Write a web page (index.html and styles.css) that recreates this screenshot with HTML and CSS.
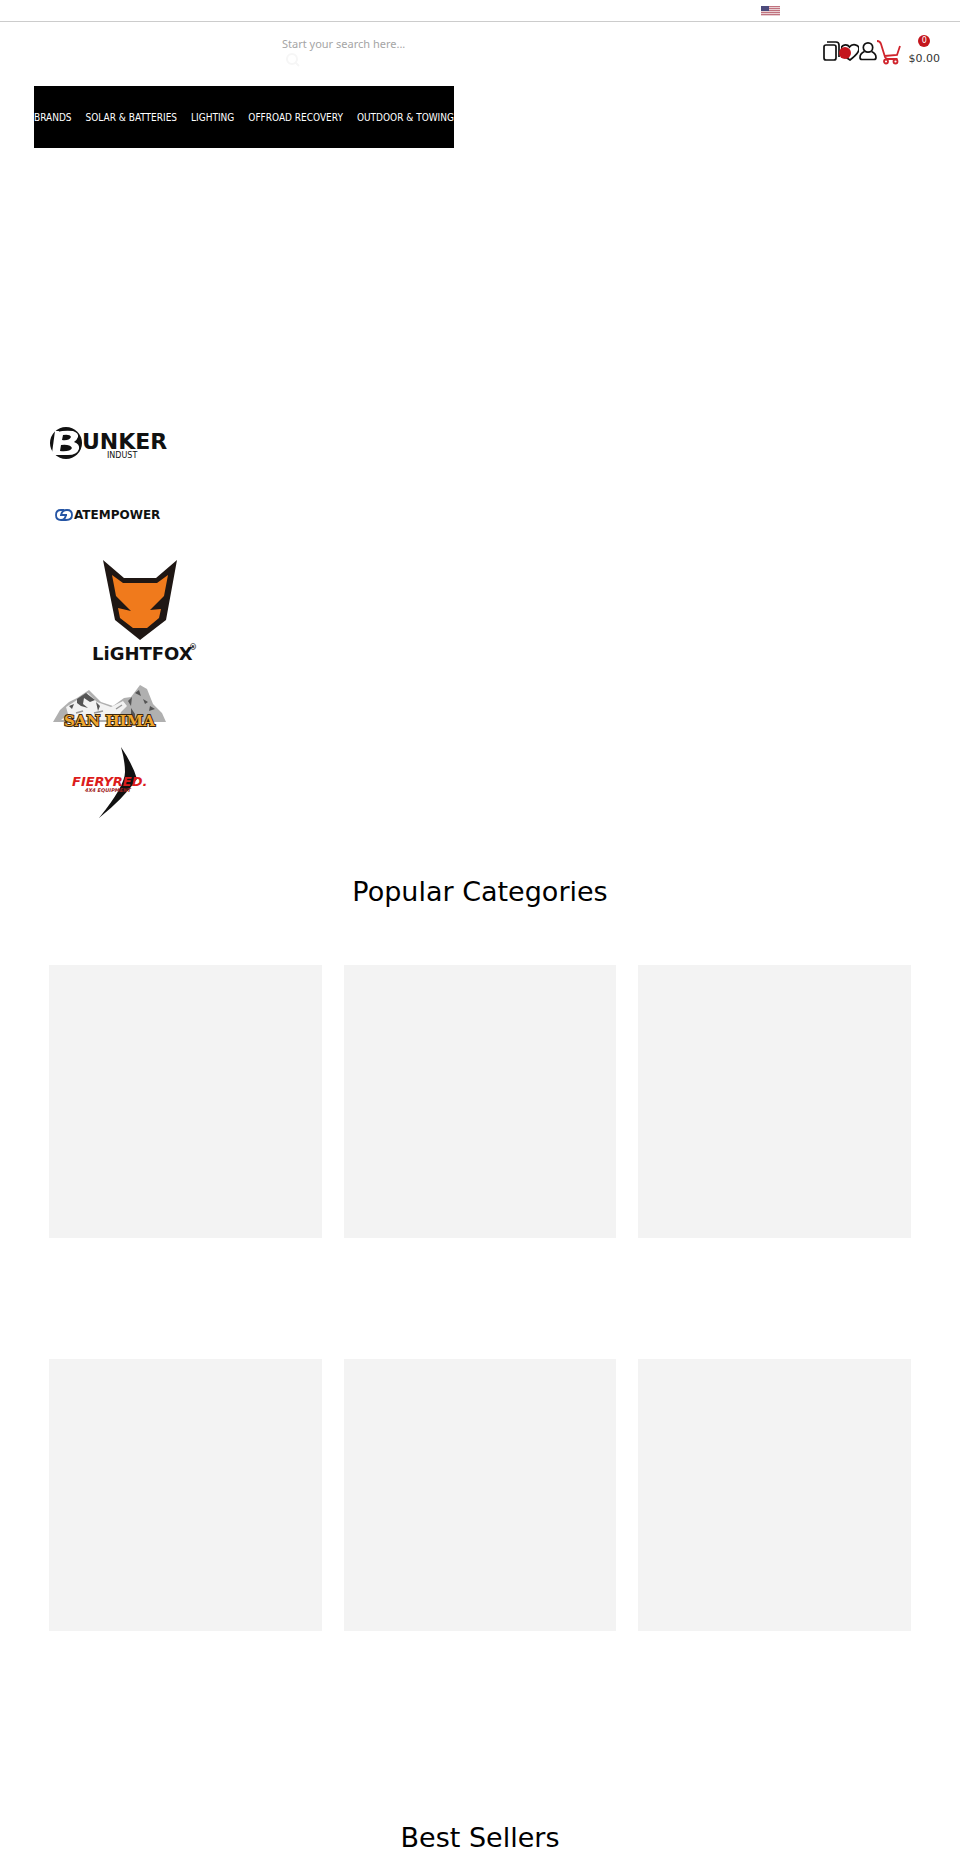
FILE: index.html
```html
<!DOCTYPE html>
<html lang="en">
<head>
    <meta charset="UTF-8">
    <meta name="viewport" content="width=device-width, initial-scale=1.0">
    <title>Popular Categories</title>
    <link rel="stylesheet" href="styles.css">
</head>
<body>
    <div class="topbar">
        <svg class="flag" viewBox="0 0 19 10" role="img" aria-label="United States">
            <rect width="19" height="10" fill="#e9cfd3"/>
            <path d="M0 .5h19M0 2.5h19M0 4.5h19M0 6.5h19M0 8.5h19" stroke="#c0737f" stroke-width="1"/>
            <rect width="8" height="5" fill="#4d4b7c"/>
        </svg>
    </div>

    <header class="header">
        <form class="search">
            <input type="text" placeholder="Start your search here..." aria-label="Search">
            <button type="button" aria-label="Submit search">
                <svg viewBox="0 0 14 14" width="14" height="14" fill="none" stroke="#f6f6f6" stroke-width="2">
                    <circle cx="6" cy="6" r="5"/>
                    <path d="M9 9L13 13"/>
                </svg>
            </button>
        </form>
        <div class="tools">
            <a href="#" class="tool" aria-label="Compare">
                <svg viewBox="0 0 18 24" width="18" height="24" fill="none" stroke="#111" stroke-width="1.700">
                    <rect x="1" y="5" width="12" height="15" rx="2"/>
                    <path d="M4 2h9q3 0 3 3v12"/>
                </svg>
                <span class="dot"></span>
            </a>
            <a href="#" class="tool" aria-label="Wishlist">
                <svg viewBox="0 0 18 24" width="18" height="24" fill="none" stroke="#111" stroke-width="1.700">
                    <path d="M9 20C4 17 0 13 0 9.500c0-5 6-6 8.500-2.500C11 3.500 18 4 18 9c0 4-5 8-9 11z"/>
                </svg>
            </a>
            <a href="#" class="tool" aria-label="Account">
                <svg viewBox="0 0 18 24" width="18" height="24" fill="none" stroke="#111" stroke-width="1.700">
                    <circle cx="9" cy="7.500" r="4.700"/>
                    <path d="M5.500 11.500C2 13 1 15.500 1 17.500q0 2 2 2h12q2 0 2-2c0-2-1-4.500-4.500-6"/>
                </svg>
            </a>
            <a href="#" class="tool" aria-label="Cart">
                <svg viewBox="0 0 24 26" width="24" height="26" fill="none" stroke="#d0242c" stroke-width="1.800">
                    <path d="M0 1q3 0 4 3l4 13q1 2 3 2h9.500M7.500 16l12.500-1L23 6"/>
                    <circle cx="9" cy="21.500" r="2"/>
                    <circle cx="18.500" cy="21.500" r="2"/>
                </svg>
            </a>
            <div class="total">
                <span class="count">0</span>
                <span>$0.00</span>
            </div>
        </div>
    </header>

    <nav class="nav">
        <a href="#">BRANDS</a>
        <a href="#">SOLAR &amp; BATTERIES</a>
        <a href="#">LIGHTING</a>
        <a href="#">OFFROAD RECOVERY</a>
        <a href="#">OUTDOOR &amp; TOWING</a>
    </nav>

    <main>
        <div class="brands">
            <a href="#">
                <svg class="logo" viewBox="0 0 120 72" width="120" height="72">
                    <circle cx="17" cy="36" r="16" fill="#111"/>
                    <path d="M6 24L10 24L7 48L3 46z" fill="#fff"/>
                    <path fill-rule="evenodd" fill="#fff" d="M8 25Q16 23 24 24Q30 26 29 30Q28 33 25 35Q31 37 30 42Q28 48 19 48L5 48Q7 36 8 25zM14 28L13 33Q20 34 22 30Q21 27 14 28zM12 38L11 44Q21 45 23 41Q21 37 12 38z"/>
                    <text class="bunker" x="33" y="42">UNKER</text>
                    <text class="indust" x="58" y="51">INDUST</text>
                </svg>
            </a>
            <a href="#">
                <svg class="logo" viewBox="0 0 120 72" width="120" height="72">
                    <path d="M15 31H12Q7 31 7 36T12 41Q16 41 17 36H12M14 41H17Q23 41 23 36T18 31Q13 31 12 36H18" fill="none" stroke="#2454a4" stroke-width="1.800"/>
                    <text class="atem" x="25" y="40">ATEMPOWER</text>
                </svg>
            </a>
            <a href="#">
                <svg class="logo" viewBox="0 0 186 120" width="186" height="120">
                    <path d="M54 9L75 27H107L128 9L117 69L91 89L66 69z" fill="#1f1714"/>
                    <path d="M63 24L74 32H108L119 24L115 45L101 59L112 58L110 67L98 77H84L71 67L69 57L82 60L67 45z" fill="#f07a1c"/>
                    <text class="fox" x="43" y="109">LiGHTFOX</text>
                    <text class="reg" x="140" y="99">®</text>
                </svg>
            </a>
            <a href="#">
                <svg class="logo" viewBox="0 0 120 72" width="120" height="72">
                    <path d="M4 51L11 39L20 31L28 27L40 19L52 31L64 35L75 27L82 26L91 14L98 18L104 33L113 42L117 51z" fill="#b0b0b0"/>
                    <path d="M17 36L28 29L39 22L48 31L62 36L74 30L78 35L72 41L69 49H12L19 43z" fill="#f2f2f2"/>
                    <path d="M28 28l9-6 9 7-5 2-6-4-1 6 5 4-7-2-4-3zM20 35l5-2-2 5zM47 31l4 4-2 5zM86 22l4-3 2 6zM79 30l4-4-1 9zM94 28l5 3-3 2zM82 37l4 6v7l-4-5zM101 35l5 3-6 2z" fill="#555"/>
                    <path d="M27 42l7-2M45 42l9-2M67 38l6-4" stroke="#999" stroke-width="1.500"/>
                    <text class="hima" x="15" y="55">SAN HIMA</text>
                </svg>
            </a>
            <a href="#">
                <svg class="logo" viewBox="0 0 120 75" width="120" height="75">
                    <path d="M72 4Q84 22 88 36Q74 56 50 75Q76 43 76 29Q76 18 72 4z" fill="#111"/>
                    <text class="fiery" x="23" y="43">FIERYRED.</text>
                    <text class="equip" x="36" y="49">4X4 EQUIPMENT</text>
                </svg>
            </a>
        </div>

        <section class="categories">
            <h2>Popular Categories</h2>
            <div class="grid">
                <a href="#" class="card" aria-label="Category 1"></a>
                <a href="#" class="card" aria-label="Category 2"></a>
                <a href="#" class="card" aria-label="Category 3"></a>
                <a href="#" class="card" aria-label="Category 4"></a>
                <a href="#" class="card" aria-label="Category 5"></a>
                <a href="#" class="card" aria-label="Category 6"></a>
            </div>
        </section>

        <section class="sellers">
            <h2>Best Sellers</h2>
        </section>
    </main>
</body>
</html>
```
FILE: styles.css
```css
* {
    box-sizing: border-box;
}
body {
    margin: 0;
    font-family: "DejaVu Sans", sans-serif;
    font-size: 11px;
    color: #000;
    background-color: #fff;
}
a {
    color: inherit;
    text-decoration: none;
}
.topbar {
    display: flex;
    justify-content: flex-end;
    align-items: center;
    height: 22px;
    padding-right: 180px;
    border-bottom: 1px solid #ccc;
}
.flag {
    width: 19px;
    height: 10px;
}
.header {
    display: flex;
    justify-content: space-between;
    align-items: flex-start;
    height: 64px;
    padding: 12px 20px 0 282px;
}
.search {
    display: flex;
    flex-direction: column;
    align-items: flex-start;
}
.search input {
    width: 180px;
    height: 18px;
    padding: 0;
    border: none;
    outline: none;
    background: none;
    font-family: "Noto Sans", sans-serif;
    font-size: 11px;
}
.search input::placeholder {
    color: #a5a5a5;
    opacity: 1;
}
.search button {
    display: flex;
    padding: 0;
    margin: 1px 0 0 4px;
    border: none;
    background: none;
}
.tools {
    display: flex;
    align-items: flex-start;
}
.tool {
    display: flex;
    position: relative;
    padding-top: 6px;
}
.dot {
    position: absolute;
    top: 13px;
    right: -10px;
    z-index: 1;
    width: 12px;
    height: 12px;
    border-radius: 50%;
    background-color: #c4151c;
}
.total {
    display: flex;
    flex-direction: column;
    align-items: center;
    gap: 5px;
    padding-top: 1px;
    margin-left: 8px;
    color: #333;
    line-height: 14px;
}
.count {
    width: 12px;
    height: 12px;
    border-radius: 50%;
    background-color: #c4151c;
    color: #fff;
    font-size: 8px;
    line-height: 12px;
    text-align: center;
}
.nav {
    display: flex;
    align-items: center;
    gap: 14px;
    width: max-content;
    height: 62px;
    margin-left: 34px;
    background-color: #000;
    color: #fff;
    font-family: "DejaVu Sans Condensed", "DejaVu Sans", sans-serif;
    font-size: 10px;
}
.brands {
    display: flex;
    flex-direction: column;
    align-items: flex-start;
    padding: 259px 49px 0;
}
.brands a,
.logo {
    display: block;
}
.logo text {
    font-family: "DejaVu Sans", sans-serif;
    font-weight: bold;
    fill: #111;
}
.logo .bunker {
    font-size: 22px;
}
.logo .indust {
    font-size: 8px;
    font-weight: normal;
}
.logo .atem {
    font-size: 12px;
}
.logo .fox {
    font-size: 18px;
}
.logo .reg {
    font-size: 8px;
}
.logo .hima {
    font-family: "DejaVu Serif", serif;
    font-size: 15px;
    fill: #f0a830;
    stroke: #3a2610;
    stroke-width: 2px;
    paint-order: stroke;
}
.logo .fiery {
    font-size: 13px;
    font-style: italic;
    fill: #dc1c1c;
}
.logo .equip {
    font-size: 5px;
    font-style: italic;
    fill: #a02020;
}
h2 {
    margin: 0;
    font-size: 27px;
    font-weight: normal;
    line-height: 36px;
    text-align: center;
}
.categories {
    padding: 56px 49px 0;
}
.grid {
    display: grid;
    grid-template-columns: repeat(3, 1fr);
    gap: 121px 22px;
    margin-top: 55px;
}
.card {
    aspect-ratio: 1;
    background-color: #f3f3f3;
}
.sellers {
    padding: 189px 49px 20px;
}
```
